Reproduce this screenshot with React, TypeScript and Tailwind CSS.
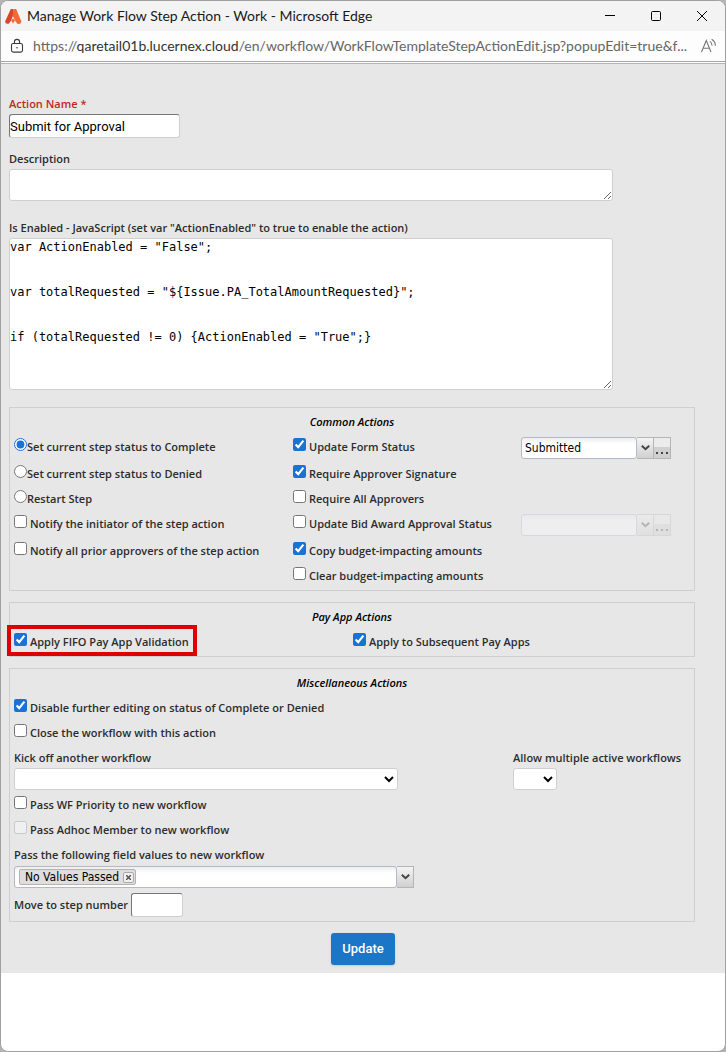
import { useState, type ReactNode } from 'react';

const ENABLED_SCRIPT = `var ActionEnabled = "False";


var totalRequested = "\${Issue.PA_TotalAmountRequested}";


if (totalRequested != 0) {ActionEnabled = "True";}`;

function TitleBar() {
  return (
    <header className="flex h-[30px] shrink-0 items-center bg-[#f3f3f3] pl-1">
      <svg width="17" height="17" viewBox="0 0 17 17" aria-hidden="true">
        <path d="M5.8 1h2.6L9 5.4 5.6 13.6 3.4 16 .6 15.2.2 13.2z" fill="#d9472b" />
        <path d="M8.8 1h2.4l5.2 12.6-1 2.2-2.8.2-1.8-2.2L7.6 7.4z" fill="#f26a36" />
        <path d="M6.2 12.6L8 10.2l2 2.4-2 3z" fill="#f26a36" />
      </svg>
      <h1 className="min-w-0 flex-1 truncate pl-[5px] font-['Lato',sans-serif] text-[14px] leading-5 text-[#1a1a1a]">
        Manage Work Flow Step Action - Work - Microsoft Edge
      </h1>
      <div className="flex">
        <button type="button" aria-label="Minimize" className="flex h-[30px] w-[46px] items-center justify-center">
          <svg width="12" height="12" viewBox="0 0 12 12" stroke="#000" fill="none">
            <path d="M1 5.5h10" />
          </svg>
        </button>
        <button type="button" aria-label="Maximize" className="flex h-[30px] w-[46px] items-center justify-center">
          <svg width="12" height="12" viewBox="0 0 12 12" stroke="#000" fill="none">
            <rect x="1.5" y="1.5" width="9" height="9" rx="1" />
          </svg>
        </button>
        <button type="button" aria-label="Close" className="flex h-[30px] w-[46px] items-center justify-center">
          <svg width="12" height="12" viewBox="0 0 12 12" stroke="#000" fill="none">
            <path d="M1 1l10 10M11 1L1 11" />
          </svg>
        </button>
      </div>
    </header>
  );
}

function AddressBar() {
  return (
    <div className="flex h-[30px] shrink-0 items-center bg-[#fdfdfd] pr-2 pl-[9px]">
      <svg width="14" height="16" viewBox="0 0 14 16" fill="none" stroke="#3b3b3b" strokeWidth="1.1" aria-hidden="true">
        <rect x="1.5" y="5.5" width="11" height="8.6" rx="1.8" />
        <path d="M4.4 5.4V4a2.6 2.6 0 0 1 5.2 0v1.4" />
        <circle cx="7" cy="9.8" r="0.8" fill="#3b3b3b" stroke="none" />
      </svg>
      <p className="min-w-0 flex-1 truncate pl-[9px] font-['Lato',sans-serif] text-[14px] leading-5 text-[#666]">
        https://<span className="text-[#333]">qaretail01b.lucernex.cloud</span>
        /en/workflow/WorkFlowTemplateStepActionEdit.jsp?popupEdit=true&amp;f...
      </p>
      <button type="button" aria-label="Read aloud">
        <svg width="17" height="16" viewBox="0 0 17 16" fill="none" stroke="#777" strokeWidth="1.1">
          <path d="M1.5 14L6.3 2.5 11 14M3 10.2h6.4" />
          <path d="M9.8 3.4c1.4.9 2.2 2.3 2.2 4M11.6 1.2c2.4 1.4 3.8 3.8 3.8 6.6" />
        </svg>
      </button>
    </div>
  );
}

function Option({ type = 'checkbox', name, checked = false, disabled = false, children }: {
  type?: 'checkbox' | 'radio';
  name?: string;
  checked?: boolean;
  disabled?: boolean;
  children: ReactNode;
}) {
  return (
    <label className="flex h-[25px] items-start leading-[25px]">
      <input
        type={type}
        name={name}
        defaultChecked={checked}
        disabled={disabled}
        className="mt-1 size-[13px] shrink-0 accent-[#1a73d4]"
      />
      <span className={type === 'checkbox' ? 'pl-[3px]' : ''}>{children}</span>
    </label>
  );
}

function Panel({ title, children }: { title: string; children: ReactNode }) {
  return (
    <section className="border border-[#cfcfcf] px-1">
      <h2 className="h-[26px] text-center leading-7 text-black italic">{title}</h2>
      {children}
    </section>
  );
}

function DropArrow() {
  return (
    <svg width="9" height="6" viewBox="0 0 9 6" fill="none" stroke="#444" strokeWidth="2" aria-hidden="true">
      <path d="M.8.8l3.7 3.4L8.2.8" />
    </svg>
  );
}

function StatusPicker({ label, value, disabled = false }: { label: string; value: string; disabled?: boolean }) {
  return (
    <div className={`mt-[3px] flex h-[22px] ${disabled ? 'opacity-30' : ''}`}>
      <input
        type="text"
        aria-label={label}
        defaultValue={value}
        disabled={disabled}
        className="w-[116px] rounded-[3px] border border-[#b5b8c8] bg-linear-to-b from-[#eee] to-white to-30% px-[3px] font-['DejaVu_Sans_Condensed','DejaVu_Sans',sans-serif] text-[12px] font-normal text-black"
      />
      <button type="button" disabled={disabled} aria-label={`Open ${label}`} className="flex w-[17px] items-center justify-center border-y border-r border-[#b5b5b5] bg-linear-to-b from-[#f4f4f4] to-[#d0d0d0]">
        <DropArrow />
      </button>
      <button type="button" disabled={disabled} aria-label={`Browse ${label}`} className="flex w-[17px] items-end justify-center border-y border-r border-[#b5b5b5] bg-linear-to-b from-[#ececec] from-45% to-[#d0d0d0] to-45% pb-1">
        <svg width="12" height="2" viewBox="0 0 12 2" fill="#444" aria-hidden="true">
          <path d="M0 0h2v2H0zM5 0h2v2H5zM10 0h2v2h-2z" />
        </svg>
      </button>
    </div>
  );
}

function CommonActions() {
  return (
    <Panel title="Common Actions">
      <div className="grid grid-cols-[279fr_228fr_169fr] grid-rows-[27px_25px_25px_27px_25px_27px]">
        <Option type="radio" name="stepStatus" checked>Set current step status to Complete</Option>
        <Option checked>Update Form Status</Option>
        <StatusPicker label="form status" value="Submitted" />
        <Option type="radio" name="stepStatus">Set current step status to Denied</Option>
        <div className="col-span-2"><Option checked>Require Approver Signature</Option></div>
        <Option type="radio" name="stepStatus">Restart Step</Option>
        <div className="col-span-2"><Option>Require All Approvers</Option></div>
        <Option>Notify the initiator of the step action</Option>
        <Option>Update Bid Award Approval Status</Option>
        <StatusPicker label="bid award approval status" value="" disabled />
        <Option>Notify all prior approvers of the step action</Option>
        <div className="col-span-2"><Option checked>Copy budget-impacting amounts</Option></div>
        <div className="col-start-2"><Option>Clear budget-impacting amounts</Option></div>
      </div>
    </Panel>
  );
}

function PayAppActions() {
  return (
    <Panel title="Pay App Actions">
      <div className="grid grid-cols-[339fr_337fr] pb-[2px]">
        <div className="relative">
          <Option checked>Apply FIFO Pay App Validation</Option>
          <div className="pointer-events-none absolute -top-1 -left-[7px] h-[31px] w-[190px] border-4 border-[#df0000]" />
        </div>
        <Option checked>Apply to Subsequent Pay Apps</Option>
      </div>
    </Panel>
  );
}

function PassedValues() {
  const [values, setValues] = useState(['No Values Passed']);

  return (
    <div className="mt-px flex h-[22px] w-[400px] max-w-full">
      <div className="flex min-w-0 flex-1 items-center gap-1 rounded-[3px] border border-[#b5b8c8] bg-linear-to-b from-[#eee] to-white to-30% px-1">
        {values.map((value) => (
          <span key={value} className="flex h-4 items-center gap-1 rounded-[2px] border border-[#b9b1b1] bg-[#dedede] pr-px pl-[5px] font-['DejaVu_Sans_Condensed','DejaVu_Sans',sans-serif] text-[12px] font-normal text-black">
            {value}
            <button
              type="button"
              aria-label={`Remove ${value}`}
              onClick={() => setValues(values.filter((v) => v !== value))}
              className="flex size-[11px] items-center justify-center rounded-[2px] border border-[#aaa] bg-[#f0f0f0]"
            >
              <svg width="5" height="5" viewBox="0 0 5 5" stroke="#555" strokeWidth="1.5">
                <path d="M0 0l5 5M5 0L0 5" />
              </svg>
            </button>
          </span>
        ))}
      </div>
      <button type="button" aria-label="Choose field values" className="flex w-[17px] items-center justify-center border-y border-r border-[#b5b5b5] bg-linear-to-b from-[#f4f4f4] to-[#d0d0d0]">
        <DropArrow />
      </button>
    </div>
  );
}

function MiscActions() {
  return (
    <Panel title="Miscellaneous Actions">
      <Option checked>Disable further editing on status of Complete or Denied</Option>
      <Option>Close the workflow with this action</Option>
      <div className="grid grid-cols-[499fr_177fr]">
        <div>
          <label htmlFor="kickOff" className="block pt-[5px] pb-[3px] leading-[15px]">Kick off another workflow</label>
          <select id="kickOff" className="block h-[22px] w-96 max-w-full rounded-[3px] border border-[#cfcfcf] bg-white text-black" />
        </div>
        <div>
          <label htmlFor="allowMultiple" className="block pt-[5px] pb-[3px] leading-[15px] whitespace-nowrap">Allow multiple active workflows</label>
          <select id="allowMultiple" className="block h-[22px] w-11 rounded-[3px] border border-[#cfcfcf] bg-white text-black" />
        </div>
      </div>
      <div className="pt-[2px]">
        <Option>Pass WF Priority to new workflow</Option>
        <Option disabled>Pass Adhoc Member to new workflow</Option>
      </div>
      <p className="pt-[5px] pb-[3px] leading-[15px]">Pass the following field values to new workflow</p>
      <PassedValues />
      <div className="flex items-center gap-[3px] pt-[5px] pb-1">
        <label htmlFor="stepNumber">Move to step number</label>
        <input id="stepNumber" type="text" className="h-6 w-[52px] rounded-[3px] border border-[#cfcfcf] border-t-[#777] border-l-[#777] bg-white px-px" />
      </div>
    </Panel>
  );
}

export default function App() {
  return (
    <div className="bg-[#b4b4b4]">
      <div className="flex min-h-screen flex-col overflow-hidden rounded-lg border border-[#a0a0a0] bg-white">
        <TitleBar />
        <AddressBar />
        <form
          onSubmit={(e) => e.preventDefault()}
          className="border-t border-[#a5a5a5] bg-[#e7e7e7] font-['Open_Sans',sans-serif] text-[11px] font-semibold text-[#2c2c2c]"
        >
          <div className="mb-8 h-[2px] border-b border-[#b5b5b5] bg-white" />
          <div className="pr-[30px] pb-2 pl-2">
            <label htmlFor="actionName" className="block pb-[3px] leading-[15px] text-[#c0281c]">Action Name *</label>
            <input
              id="actionName"
              type="text"
              defaultValue="Submit for Approval"
              className="block h-6 w-[171px] rounded-[3px] border border-[#cfcfcf] border-t-[#777] border-l-[#777] bg-white font-['Roboto',sans-serif] text-[13px] font-normal text-black"
            />
            <label htmlFor="description" className="block pt-[13px] pb-[3px] leading-[15px]">Description</label>
            <textarea id="description" className="block h-8 w-[604px] max-w-full rounded-[3px] border border-[#cfcfcf] bg-white" />
            <label htmlFor="enabledScript" className="block pt-[19px] pb-[3px] leading-[15px]">
              Is Enabled - JavaScript (set var "ActionEnabled" to true to enable the action)
            </label>
            <textarea
              id="enabledScript"
              defaultValue={ENABLED_SCRIPT}
              className="block h-[152px] w-[604px] max-w-full rounded-[3px] border border-[#cfcfcf] bg-white pt-px font-['DejaVu_Sans_Mono',monospace] text-[12px] leading-[15px] font-normal text-black"
            />
            <div className="flex flex-col gap-[11px] pt-[17px]">
              <CommonActions />
              <PayAppActions />
              <MiscActions />
              <button type="submit" className="ml-[22px] h-8 self-center rounded-[3px] bg-[#1c76c8] px-[11px] font-['Roboto',sans-serif] text-[13px] font-medium text-white shadow-sm">
                Update
              </button>
            </div>
          </div>
        </form>
      </div>
    </div>
  );
}
